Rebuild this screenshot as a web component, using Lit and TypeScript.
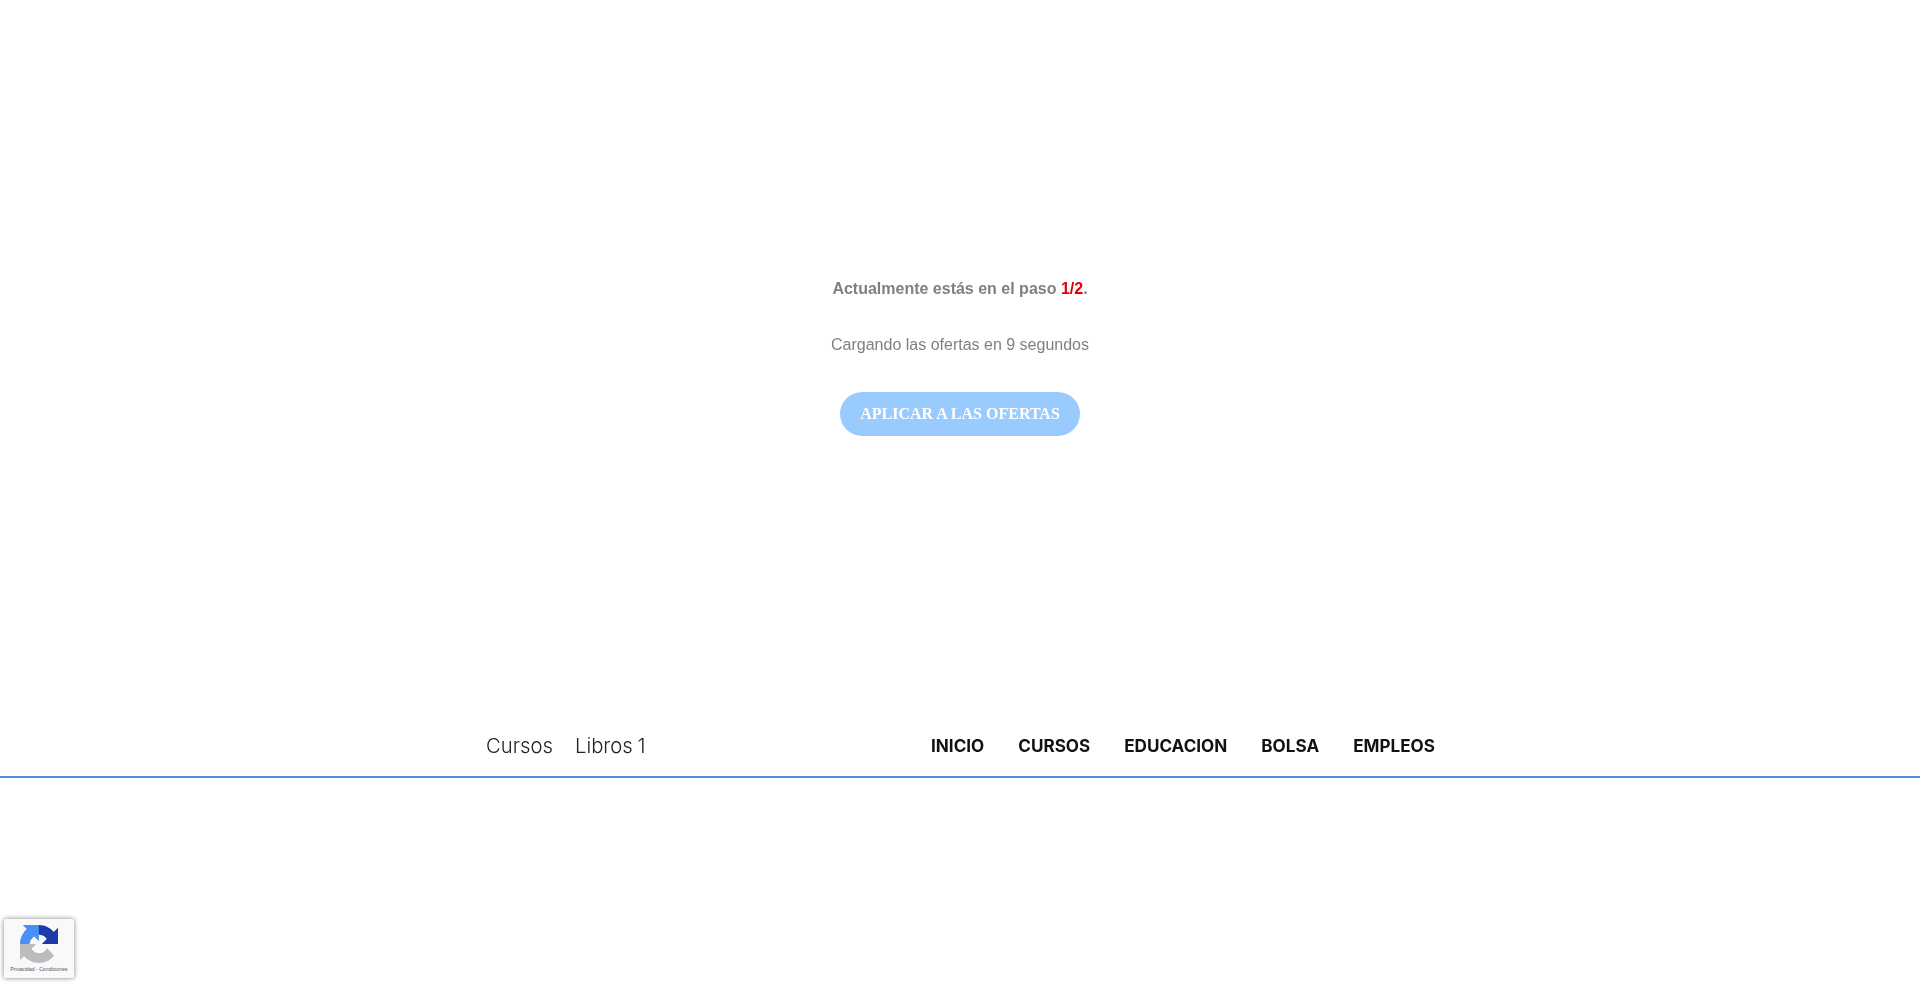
import { LitElement, html, css } from "lit";
import { customElement } from "lit/decorators.js";

@customElement("app-root")
export class AppRoot extends LitElement {
  static styles = css`
    :host { display: block; position: relative; height: 993px; overflow: hidden; background: #fff; font-family: "Liberation Sans", Arial, sans-serif; }
    .step { padding-top: 280px; display: flex; flex-direction: column; align-items: center; height: 712px; box-sizing: border-box; color: #808080; font-size: 16px; line-height: 18px; will-change: transform; }
    .line1 { font-weight: 700; }
    .line1 b { color: #e00000; }
    .line2 { margin-top: 38px; }
    .btn { margin-top: 38px; width: 240px; height: 44px; border: 0; border-radius: 22px; background: #99cbff; color: #fff; font: 700 16px "Liberation Serif", serif; padding: 0; }
    nav { height: 66px; box-sizing: border-box; border-bottom: 2px solid #4a90d9; display: flex; align-items: center; padding: 2px 0 0 486px; font-family: Inter, sans-serif; will-change: transform; }
    .left { display: flex; gap: 22px; font-size: 20.3px; font-weight: 300; color: #222; width: 445px; word-spacing: -1px; }
    .right { display: flex; gap: 34px; font-size: 17.1px; font-weight: 700; color: #111; }
    .badge { position: absolute; left: 4px; top: 919px; width: 70px; height: 59px; background: #f9f9f9; box-shadow: 0 0 5px rgba(0,0,0,.5); border-radius: 2px; display: flex; flex-direction: column; align-items: center; }
    .badge svg { margin-top: 6px; }
    .badge span { font: 5.2px "Liberation Sans", sans-serif; color: #555; margin-top: 3px; white-space: nowrap; }
  `;
  render() {
    return html`
      <div class="step">
        <div class="line1">Actualmente estás en el paso <b>1/2</b>.</div>
        <div class="line2">Cargando las ofertas en 9 segundos</div>
        <button class="btn">APLICAR A LAS OFERTAS</button>
      </div>
      <nav>
        <div class="left"><span>Cursos</span><span>Libros 1</span></div>
        <div class="right"><span>INICIO</span><span>CURSOS</span><span>EDUCACION</span><span>BOLSA</span><span>EMPLEOS</span></div>
      </nav>
      <div class="badge">
        <svg width="38" height="38" viewBox="0 0 64 64">
          <path fill="#1c3aa9" d="M64 31.955l-.033-1.37V4.687l-7.16 7.16C50.948 4.674 42.033.093 32.05.093c-10.4 0-19.622 4.96-25.458 12.64l11.736 11.86a15.55 15.55 0 0 1 4.754-5.334c2.05-1.6 4.952-2.906 8.968-2.906.485 0 .86.057 1.135.163 4.976.393 9.288 3.14 11.828 7.124l-8.307 8.307c10.522-.04 22.4-.066 27.295.006"/>
          <path fill="#4a8ff5" d="M31.918.094l-1.37.033H4.65l7.16 7.16C4.637 13.147.056 22.06.056 32.045c0 10.4 4.96 19.622 12.64 25.458l11.86-11.736a15.55 15.55 0 0 1-5.334-4.754c-1.6-2.05-2.906-4.952-2.906-8.968 0-.485.057-.86.163-1.135.393-4.976 3.14-9.288 7.124-11.828l8.307 8.307c-.04-10.522-.066-22.4.006-27.295"/>
          <path fill="#bcbcbc" d="M.002 31.965l.033 1.37v25.898l7.16-7.16c5.86 7.173 14.774 11.754 24.76 11.754 10.39 0 19.622-4.96 25.458-12.64L45.677 39.33a15.55 15.55 0 0 1-4.754 5.334c-2.05 1.6-4.952 2.906-8.968 2.906-.485 0-.86-.057-1.135-.163-4.976-.393-9.288-3.14-11.828-7.124l8.307-8.307c-10.522.04-22.4.066-27.295-.006"/>
        </svg>
        <span>Privacidad - Condiciones</span>
      </div>
    `;
  }
}
